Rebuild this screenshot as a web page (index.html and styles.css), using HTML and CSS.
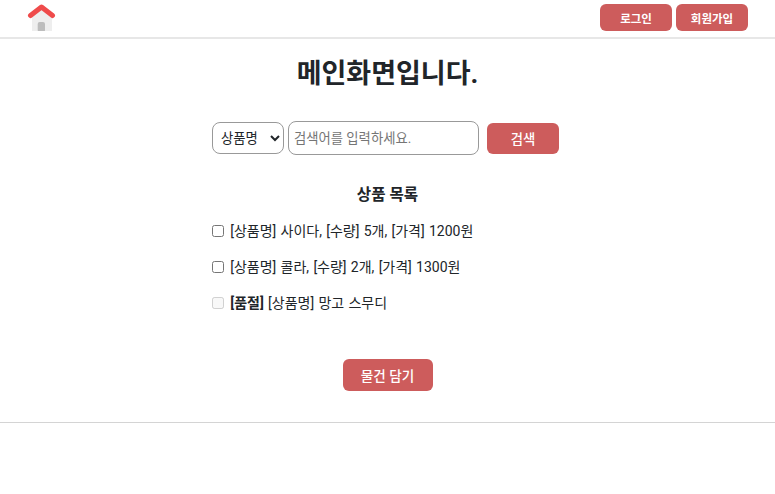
FILE: index.html
```html
<!DOCTYPE html>
<html lang="ko">
<head>
    <meta charset="UTF-8">
    <meta name="viewport" content="width=device-width, initial-scale=1.0">
    <title>메인화면</title>
    <link rel="stylesheet" href="styles.css">
</head>
<body>

<!-- Top bar -->
<header class="top-bar">
    <a class="home-link" href="#">
        <svg class="home-icon" width="30" height="30" viewBox="0 0 30 30">
            <path d="M5 12 L14.5 5 L25 12 V28 H5 Z" fill="#eeeeee"/>
            <rect x="10.7" y="19" width="7.3" height="10" rx="2" fill="#bdbdbd"/>
            <path d="M3.5 12.5 L14.5 4 L25.5 12.5" fill="none" stroke="#ef4b4b" stroke-width="5" stroke-linecap="round" stroke-linejoin="round"/>
        </svg>
    </a>
    <div class="top-buttons">
        <button class="btn btn-small">로그인</button>
        <button class="btn btn-small">회원가입</button>
    </div>
</header>

<!-- Main content -->
<main class="main-content">
    <h1>메인화면입니다.</h1>

    <form class="search-form">
        <select class="search-select">
            <option>상품명</option>
            <option>카테고리</option>
        </select>
        <input class="search-input" type="text" placeholder="검색어를 입력하세요.">
        <button class="btn btn-search" type="button">검색</button>
    </form>

    <section class="product-list">
        <h3>상품 목록</h3>
        <label class="product-item"><input type="checkbox"> [상품명] 사이다, [수량] 5개, [가격] 1200원</label>
        <label class="product-item"><input type="checkbox"> [상품명] 콜라, [수량] 2개, [가격] 1300원</label>
        <label class="product-item"><input type="checkbox" disabled> <b>[품절]</b> [상품명] 망고 스무디</label>
    </section>

    <div class="cart-row">
        <button class="btn btn-cart" type="button">물건 담기</button>
    </div>
</main>

<hr class="bottom-line">

</body>
</html>
```

FILE: styles.css
```css
* {
    box-sizing: border-box;
}

body {
    font-family: Roboto, "Noto Sans CJK KR", sans-serif;
    margin: 0;
    color: #212529;
    background-color: white;
}

/* Top bar */
.top-bar {
    display: flex;
    justify-content: space-between;
    height: 39px;
    padding: 4px 27px 0 27px;
    border-bottom: 2px solid #e7e7e7;
}

.home-link {
    display: block;
    height: 28px;
    margin-top: -1px;
    overflow: hidden;
}

.top-buttons {
    display: flex;
    gap: 4px;
}

/* Buttons */
.btn {
    border: none;
    border-radius: 6px;
    background-color: indianred;
    color: white;
    font-family: inherit;
    padding: 0;
}

.btn-small {
    width: 72px;
    height: 27px;
    font-size: 11.5px;
    font-weight: 700;
}

.btn-search {
    width: 72px;
    height: 31px;
    margin-left: 4px;
    font-size: 13.33px;
    font-weight: 500;
}

.btn-cart {
    width: 90px;
    height: 32px;
    font-size: 13.6px;
    font-weight: 500;
}

/* Main content */
.main-content {
    width: 351px;
    margin: 0 auto;
}

h1 {
    margin: 0;
    padding-top: 15px;
    font-size: 27px;
    line-height: 40px;
    font-weight: 700;
    text-align: center;
}

.search-form {
    display: flex;
    align-items: center;
    gap: 4px;
    margin-top: 27px;
}

.search-select {
    width: 72px;
    height: 32px;
    border: 1px solid #999;
    border-radius: 8px;
    background-color: white;
    padding: 0 4px;
    font-family: inherit;
    font-size: 13.33px;
    color: #212529;
}

.search-input {
    width: 191px;
    height: 34px;
    border: 1px solid #999;
    border-radius: 8px;
    padding: 0 5px;
    font-family: inherit;
    font-size: 13.33px;
}

.search-input::placeholder {
    color: #757575;
}

/* Product list */
.product-list h3 {
    margin: 28px 0 0 0;
    font-size: 15.6px;
    line-height: 24px;
    font-weight: 700;
    text-align: center;
}

.product-item {
    display: block;
    margin-top: 13px;
    font-size: 14px;
    word-spacing: 0.8px;
    line-height: 23px;
}

.product-item input {
    width: 12px;
    height: 12px;
    margin: 0 2px 0 0;
    vertical-align: -1px;
}

.cart-row {
    display: flex;
    justify-content: center;
    margin-top: 44px;
}

.bottom-line {
    margin: 31px 0 0 0;
    border: none;
    border-top: 1px solid #d4d4d4;
}
```
